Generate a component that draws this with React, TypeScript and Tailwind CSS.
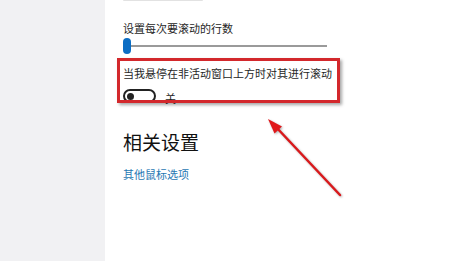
import React from 'react'

export default function App() {
  return (
    <div
      className="relative flex h-[261px] w-[466px] overflow-hidden bg-white"
      style={{ fontFamily: '"Noto Sans CJK SC", "Noto Sans", sans-serif' }}
    >
      <div className="w-[105px] shrink-0 bg-[#f1f1f3]" />

      <div className="flex flex-col pl-[18px]">
        <div className="h-px w-[80px] rounded-b bg-[#e2e2e2]" />

        <div className="mt-[19px] text-[11px] leading-[16px] text-[#262626]">设置每次要滚动的行数</div>

        <div className="mt-[2px] flex h-[16px] w-[204px] items-center">
          <div className="relative h-[16px] w-[8px] shrink-0 rounded-full bg-[#0b6dc4]" />
          <div className="h-[2px] flex-1 bg-[#9a9a9a]" />
        </div>

        <div className="mt-[11px] text-[11px] leading-[16px] text-[#262626]">当我悬停在非活动窗口上方时对其进行滚动</div>

        <div className="mt-[8px] flex h-[14px] items-center gap-[9px]">
          <div className="flex h-[14px] w-[33px] items-center rounded-full border-2 border-[#222] px-[2px]">
            <div className="h-[7px] w-[7px] rounded-full bg-[#222]" />
          </div>
          <span className="mt-[3px] text-[11px] leading-[14px] text-[#262626]">关</span>
        </div>

        <div className="mt-[27px] text-[19px] leading-[24px] text-[#111]">相关设置</div>

        <div className="mt-[12px] text-[11px] leading-[16px] text-[#1f77b3]">其他鼠标选项</div>
      </div>

      {/* annotation box */}
      <div className="absolute left-[117px] top-[58px] h-[45px] w-[223px] border-[3px] border-[#d3282c] shadow-[2px_2px_3px_rgba(0,0,0,0.35)]" />

      {/* annotation arrow */}
      <svg className="absolute left-0 top-0" width="466" height="261" viewBox="0 0 466 261">
        <g style={{ filter: 'drop-shadow(1px 1px 1px rgba(0,0,0,0.3))' }}>
          <line x1="340" y1="195" x2="276" y2="127" stroke="#d9191c" strokeWidth="2.5" strokeLinecap="round" />
          <polygon points="268,119 282,126.5 274.5,133.5" fill="#e0181b" />
        </g>
      </svg>
    </div>
  )
}
